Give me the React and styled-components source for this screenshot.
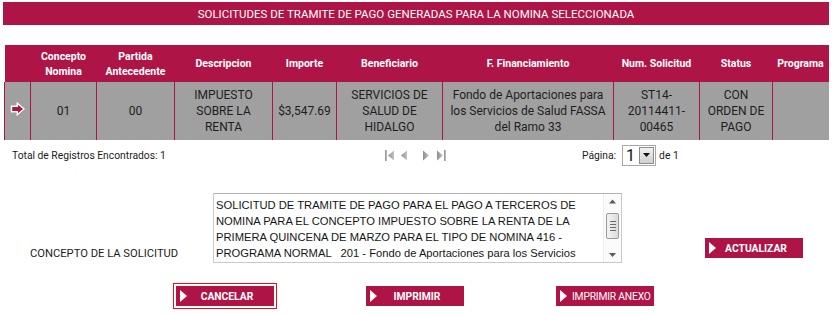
import React from 'react'
import styled, { createGlobalStyle } from 'styled-components'

const CRIMSON = '#ae1446'
const FONT = 'Roboto, "Liberation Sans", Arial, sans-serif'
const ARIAL = '"Liberation Sans", Arial, sans-serif'

const GlobalStyle = createGlobalStyle`
  body {
    margin: 0;
    background: #fff;
    font-family: ${FONT};
    color: #1c1c1c;
  }
`

const Page = styled.div`
  width: 832px;
  height: 315px;
  box-sizing: border-box;
  padding: 2px 3px 0 3px;
  overflow: hidden;
`

const TitleBar = styled.div`
  height: 23px;
  background: ${CRIMSON};
  color: #fff;
  font-size: 11.5px;
  display: flex;
  align-items: center;
  justify-content: center;
`

const Table = styled.table`
  margin: 20px 1px 0 1px;
  width: 824px;
  table-layout: fixed;
  border-collapse: collapse;
  border-spacing: 0;
`

const HeadCell = styled.th`
  height: 37px;
  padding: 0 2px;
  background: ${CRIMSON};
  color: #fff;
  font-size: 10.5px;
  font-weight: bold;
  line-height: 15px;
  text-align: center;
  vertical-align: middle;
`

const Cell = styled.td`
  height: 58px;
  padding: 0 3px;
  background: #a0a0a0;
  border-left: 1px solid ${CRIMSON};
  font-size: 12px;
  line-height: 16px;
  text-align: center;
  vertical-align: middle;
  color: #1e1e1e;
`

const Footer = styled.div`
  display: grid;
  grid-template-columns: 372px 198px auto;
  align-items: center;
  height: 21px;
  margin-top: 5px;
  padding-left: 9px;
  font-size: 10.3px;
`

const Pager = styled.div`
  display: flex;
  align-items: center;
  gap: 4px;
`

const PagerGap = styled.span`
  width: 3px;
`

const PageBox = styled.div`
  display: flex;
  align-items: center;
`

const PageLabel = styled.span`
  margin-right: 6px;
`

const Select = styled.div`
  width: 29px;
  height: 19px;
  border: 1px solid #a8a8a8;
  display: flex;
  align-items: center;
  justify-content: space-between;
  padding-left: 3px;
  box-sizing: content-box;
  margin-right: 3px;
  font-size: 16px;
  color: #111;
`

const DropButton = styled.div`
  width: 15px;
  height: 17px;
  margin-right: 1px;
  border: 1px solid #8c8c8c;
  box-sizing: border-box;
  background: linear-gradient(#f2f2f2, #cfcfcf);
  display: flex;
  align-items: center;
  justify-content: center;
`

const ConceptRow = styled.div`
  display: flex;
  margin-top: 27px;
  padding-left: 27px;
`

const ConceptLabel = styled.div`
  width: 183px;
  align-self: flex-end;
  margin-bottom: 2px;
  font-size: 11.2px;
  line-height: 14px;
`

const TextBox = styled.div`
  width: 409px;
  height: 70px;
  box-sizing: border-box;
  border: 1px solid #c9c9c9;
  border-top-color: #b4b4b4;
  display: flex;
  overflow: hidden;
`

const TextContent = styled.div`
  flex: 1;
  padding: 3px 13px 0 2px;
  font-family: ${ARIAL};
  font-size: 11.2px;
  line-height: 16px;
  white-space: pre-wrap;
  color: #161616;
  overflow: hidden;
`

const ScrollTrack = styled.div`
  width: 17px;
  background: #fbfbfb;
  border-left: 1px solid #eeeeee;
  display: flex;
  flex-direction: column;
  align-items: center;
  justify-content: space-between;
  padding: 5px 0 5px;
`

const Thumb = styled.div`
  width: 13px;
  height: 26px;
  margin-top: -4px;
  border: 1px solid #9a9a9a;
  border-radius: 2px;
  box-sizing: border-box;
  background: linear-gradient(90deg, #f4f4f4, #dcdcdc);
  display: flex;
  flex-direction: column;
  align-items: center;
  justify-content: center;
  gap: 2px;
`

const Grip = styled.span`
  width: 6px;
  height: 1px;
  background: #6a6a6a;
`

const Button = styled.button`
  display: grid;
  grid-template-columns: 11px 1fr 11px;
  align-items: center;
  width: ${p => p.$width || 98}px;
  height: 20px;
  padding: 0 0 0 4px;
  border: 0;
  background: ${CRIMSON};
  color: #fff;
  font-family: ${FONT};
  font-size: 10.3px;
  font-weight: ${p => (p.$plain ? 'normal' : 'bold')};
  letter-spacing: ${p => (p.$plain ? '-0.2px' : '0')};
  cursor: pointer;
  outline: ${p => (p.$focused ? '1px solid #e5121c' : 'none')};
  outline-offset: 2px;
`

const Triangle = styled.span`
  width: 0;
  height: 0;
  border-left: 7px solid #fff;
  border-top: 6.5px solid transparent;
  border-bottom: 6.5px solid transparent;
`

const ButtonLabel = styled.span`
  text-align: ${p => (p.$left ? 'left' : 'center')};
  padding-left: ${p => (p.$left ? '1px' : '0')};
  grid-column: ${p => (p.$left ? '2 / 4' : '2')};
  white-space: nowrap;
`

const UpdateButton = styled.div`
  align-self: flex-end;
  margin: 0 0 5px 83px;
`

const ButtonRow = styled.div`
  display: flex;
  margin-top: 23px;
  padding-left: 173px;
  gap: 92px;
`

const columns = [26, 66, 78, 98, 64, 106, 171, 86, 73, 56]

const headers = [
  '',
  ['Concepto', 'Nomina'],
  ['Partida', 'Antecedente'],
  'Descripcion',
  'Importe',
  'Beneficiario',
  'F. Financiamiento',
  'Num. Solicitud',
  'Status',
  'Programa',
]

const row = [
  '01',
  '00',
  'IMPUESTO SOBRE LA RENTA',
  '$3,547.69',
  'SERVICIOS DE SALUD DE HIDALGO',
  'Fondo de Aportaciones para los Servicios de Salud FASSA del Ramo 33',
  'ST14-20114411-00465',
  'CON ORDEN DE PAGO',
  '',
]

const concepto =
  'SOLICITUD DE TRAMITE DE PAGO PARA EL PAGO A TERCEROS DE NOMINA PARA EL CONCEPTO IMPUESTO SOBRE LA RENTA DE LA PRIMERA QUINCENA DE MARZO PARA EL TIPO DE NOMINA 416 - PROGRAMA NORMAL   201 - Fondo de Aportaciones para los Servicios de Salud FASSA del Ramo 33'

const RowArrow = () => (
  <svg width="16" height="14" viewBox="0 0 16 14">
    <path d="M1.5 4.2 H7.3 V1.2 L14 7 L7.3 12.8 V9.8 H1.5 Z" fill="#7a0d2c" opacity="0.35" transform="translate(0.8 0.8)" />
    <path d="M1.5 4.2 H7.3 V1.2 L14 7 L7.3 12.8 V9.8 H1.5 Z" fill={CRIMSON} stroke="#fff" strokeWidth="1.4" strokeLinejoin="miter" />
  </svg>
)

const PagerIcon = ({ type }) => {
  const shapes = {
    first: (
      <>
        <rect x="1" y="1" width="2" height="11" fill="url(#pg)" />
        <path d="M10 1.5 V11.5 L4 6.5 Z" fill="url(#pg)" />
      </>
    ),
    prev: <path d="M8 1.5 V11.5 L2 6.5 Z" fill="url(#pg)" />,
    next: <path d="M2 1.5 V11.5 L8 6.5 Z" fill="url(#pg)" />,
    last: (
      <>
        <path d="M1 1.5 V11.5 L7 6.5 Z" fill="url(#pg)" />
        <rect x="8" y="1" width="2" height="11" fill="url(#pg)" />
      </>
    ),
  }
  return (
    <svg width="11" height="13" viewBox="0 0 11 13">
      <defs>
        <linearGradient id="pg" x1="0" y1="0" x2="1" y2="0">
          <stop offset="0" stopColor="#8d8d8d" />
          <stop offset="1" stopColor="#c4c4c4" />
        </linearGradient>
      </defs>
      {shapes[type]}
    </svg>
  )
}

const Caret = ({ up, size = 7, color = '#111' }) => (
  <svg width={size} height={size / 2 + 1} viewBox="0 0 8 5">
    <path d={up ? 'M0 5 L4 0.5 L8 5 Z' : 'M0 0 L8 0 L4 4.5 Z'} fill={color} />
  </svg>
)

export default function App() {
  return (
    <>
      <GlobalStyle />
      <Page>
        <TitleBar>SOLICITUDES DE TRAMITE DE PAGO GENERADAS PARA LA NOMINA SELECCIONADA</TitleBar>

        <Table>
          <colgroup>
            {columns.map((w, i) => (
              <col key={i} style={{ width: w }} />
            ))}
          </colgroup>
          <thead>
            <tr>
              {headers.map((h, i) => (
                <HeadCell key={i}>
                  {Array.isArray(h) ? (
                    <>
                      {h[0]}
                      <br />
                      {h[1]}
                    </>
                  ) : (
                    h
                  )}
                </HeadCell>
              ))}
            </tr>
          </thead>
          <tbody>
            <tr>
              <Cell>
                <RowArrow />
              </Cell>
              {row.map((v, i) => (
                <Cell key={i}>{v}</Cell>
              ))}
            </tr>
          </tbody>
        </Table>

        <Footer>
          <span>Total de Registros Encontrados: 1</span>
          <Pager>
            <PagerIcon type="first" />
            <PagerIcon type="prev" />
            <PagerGap />
            <PagerIcon type="next" />
            <PagerIcon type="last" />
          </Pager>
          <PageBox>
            <PageLabel>Página:</PageLabel>
            <Select>
              1
              <DropButton>
                <Caret />
              </DropButton>
            </Select>
            <span>de 1</span>
          </PageBox>
        </Footer>

        <ConceptRow>
          <ConceptLabel>CONCEPTO DE LA SOLICITUD</ConceptLabel>
          <TextBox>
            <TextContent>{concepto}</TextContent>
            <ScrollTrack>
              <Caret up size={7} color="#5a5a5a" />
              <Thumb>
                <Grip />
                <Grip />
                <Grip />
                <Grip />
              </Thumb>
              <Caret size={7} color="#5a5a5a" />
            </ScrollTrack>
          </TextBox>
          <UpdateButton>
            <Button>
              <Triangle />
              <ButtonLabel>ACTUALIZAR</ButtonLabel>
            </Button>
          </UpdateButton>
        </ConceptRow>

        <ButtonRow>
          <Button $focused>
            <Triangle />
            <ButtonLabel>CANCELAR</ButtonLabel>
          </Button>
          <Button>
            <Triangle />
            <ButtonLabel>IMPRIMIR</ButtonLabel>
          </Button>
          <Button $plain>
            <Triangle />
            <ButtonLabel $left>IMPRIMIR ANEXO</ButtonLabel>
          </Button>
        </ButtonRow>
      </Page>
    </>
  )
}
